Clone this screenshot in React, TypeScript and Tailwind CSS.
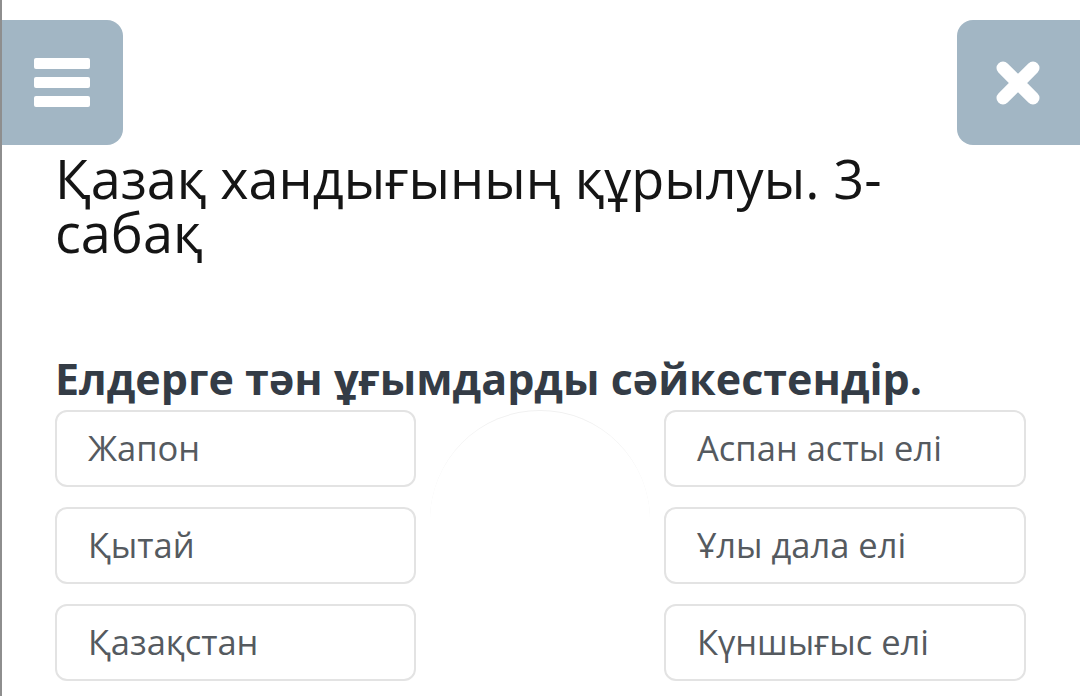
import React from "react";

const left = ["Жапон", "Қытай", "Қазақстан"];
const right = ["Аспан асты елі", "Ұлы дала елі", "Күншығыс елі"];

function Box({ text }: { text: string }) {
  return (
    <div className="h-[77px] flex items-center rounded-[12px] border-2 border-[#e3e3e3] bg-white pl-[31px]">
      <span className="text-[34.5px] leading-none text-[#555a5f]">{text}</span>
    </div>
  );
}

export default function App() {
  return (
    <div
      className="relative w-[1080px] h-[696px] overflow-hidden bg-white border-l-2 border-[#8e8e8e]"
      style={{ fontFamily: '"Open Sans", "Noto Sans", sans-serif' }}
    >
      <div className="flex justify-between pt-[20px]">
        <div className="w-[123px] h-[125px] -ml-[2px] pl-[2px] rounded-r-[16px] bg-[#a2b6c4] flex items-center justify-center">
          <div className="flex flex-col gap-[8px] ml-[-2px]">
            <div className="w-[56px] h-[11px] rounded-[2px] bg-white" />
            <div className="w-[56px] h-[11px] rounded-[2px] bg-white" />
            <div className="w-[56px] h-[11px] rounded-[2px] bg-white" />
          </div>
        </div>
        <div className="w-[123px] h-[125px] rounded-l-[16px] bg-[#a2b6c4] flex items-center pl-[38px]">
          <svg width="46" height="46" viewBox="0 0 46 46">
            <path d="M8 8 L38 38 M38 8 L8 38" stroke="white" strokeWidth="13" strokeLinecap="round" />
          </svg>
        </div>
      </div>

      <h1 className="mt-[6px] ml-[53px] w-[940px] text-[54px] leading-[54px] font-normal text-[#151515]">
        Қазақ хандығының құрылуы. 3-
        <br />
        сабақ
      </h1>

      <h2 className="mt-[96px] ml-[53px] text-[43px] leading-[48px] font-bold text-[#343c46]">
        Елдерге тән ұғымдарды сәйкестендір.
      </h2>

      <div className="relative mt-[7px] ml-[53px] w-[971px] grid grid-cols-[361px_362px] justify-between gap-y-[20px]">
        <div className="pointer-events-none absolute left-[375px] top-[0px] w-[220px] h-[260px] rounded-[110px] border-t border-[#f1f1f1]" />
        {left.map((l, i) => (
          <React.Fragment key={i}>
            <Box text={l} />
            <Box text={right[i]} />
          </React.Fragment>
        ))}
      </div>
    </div>
  );
}
